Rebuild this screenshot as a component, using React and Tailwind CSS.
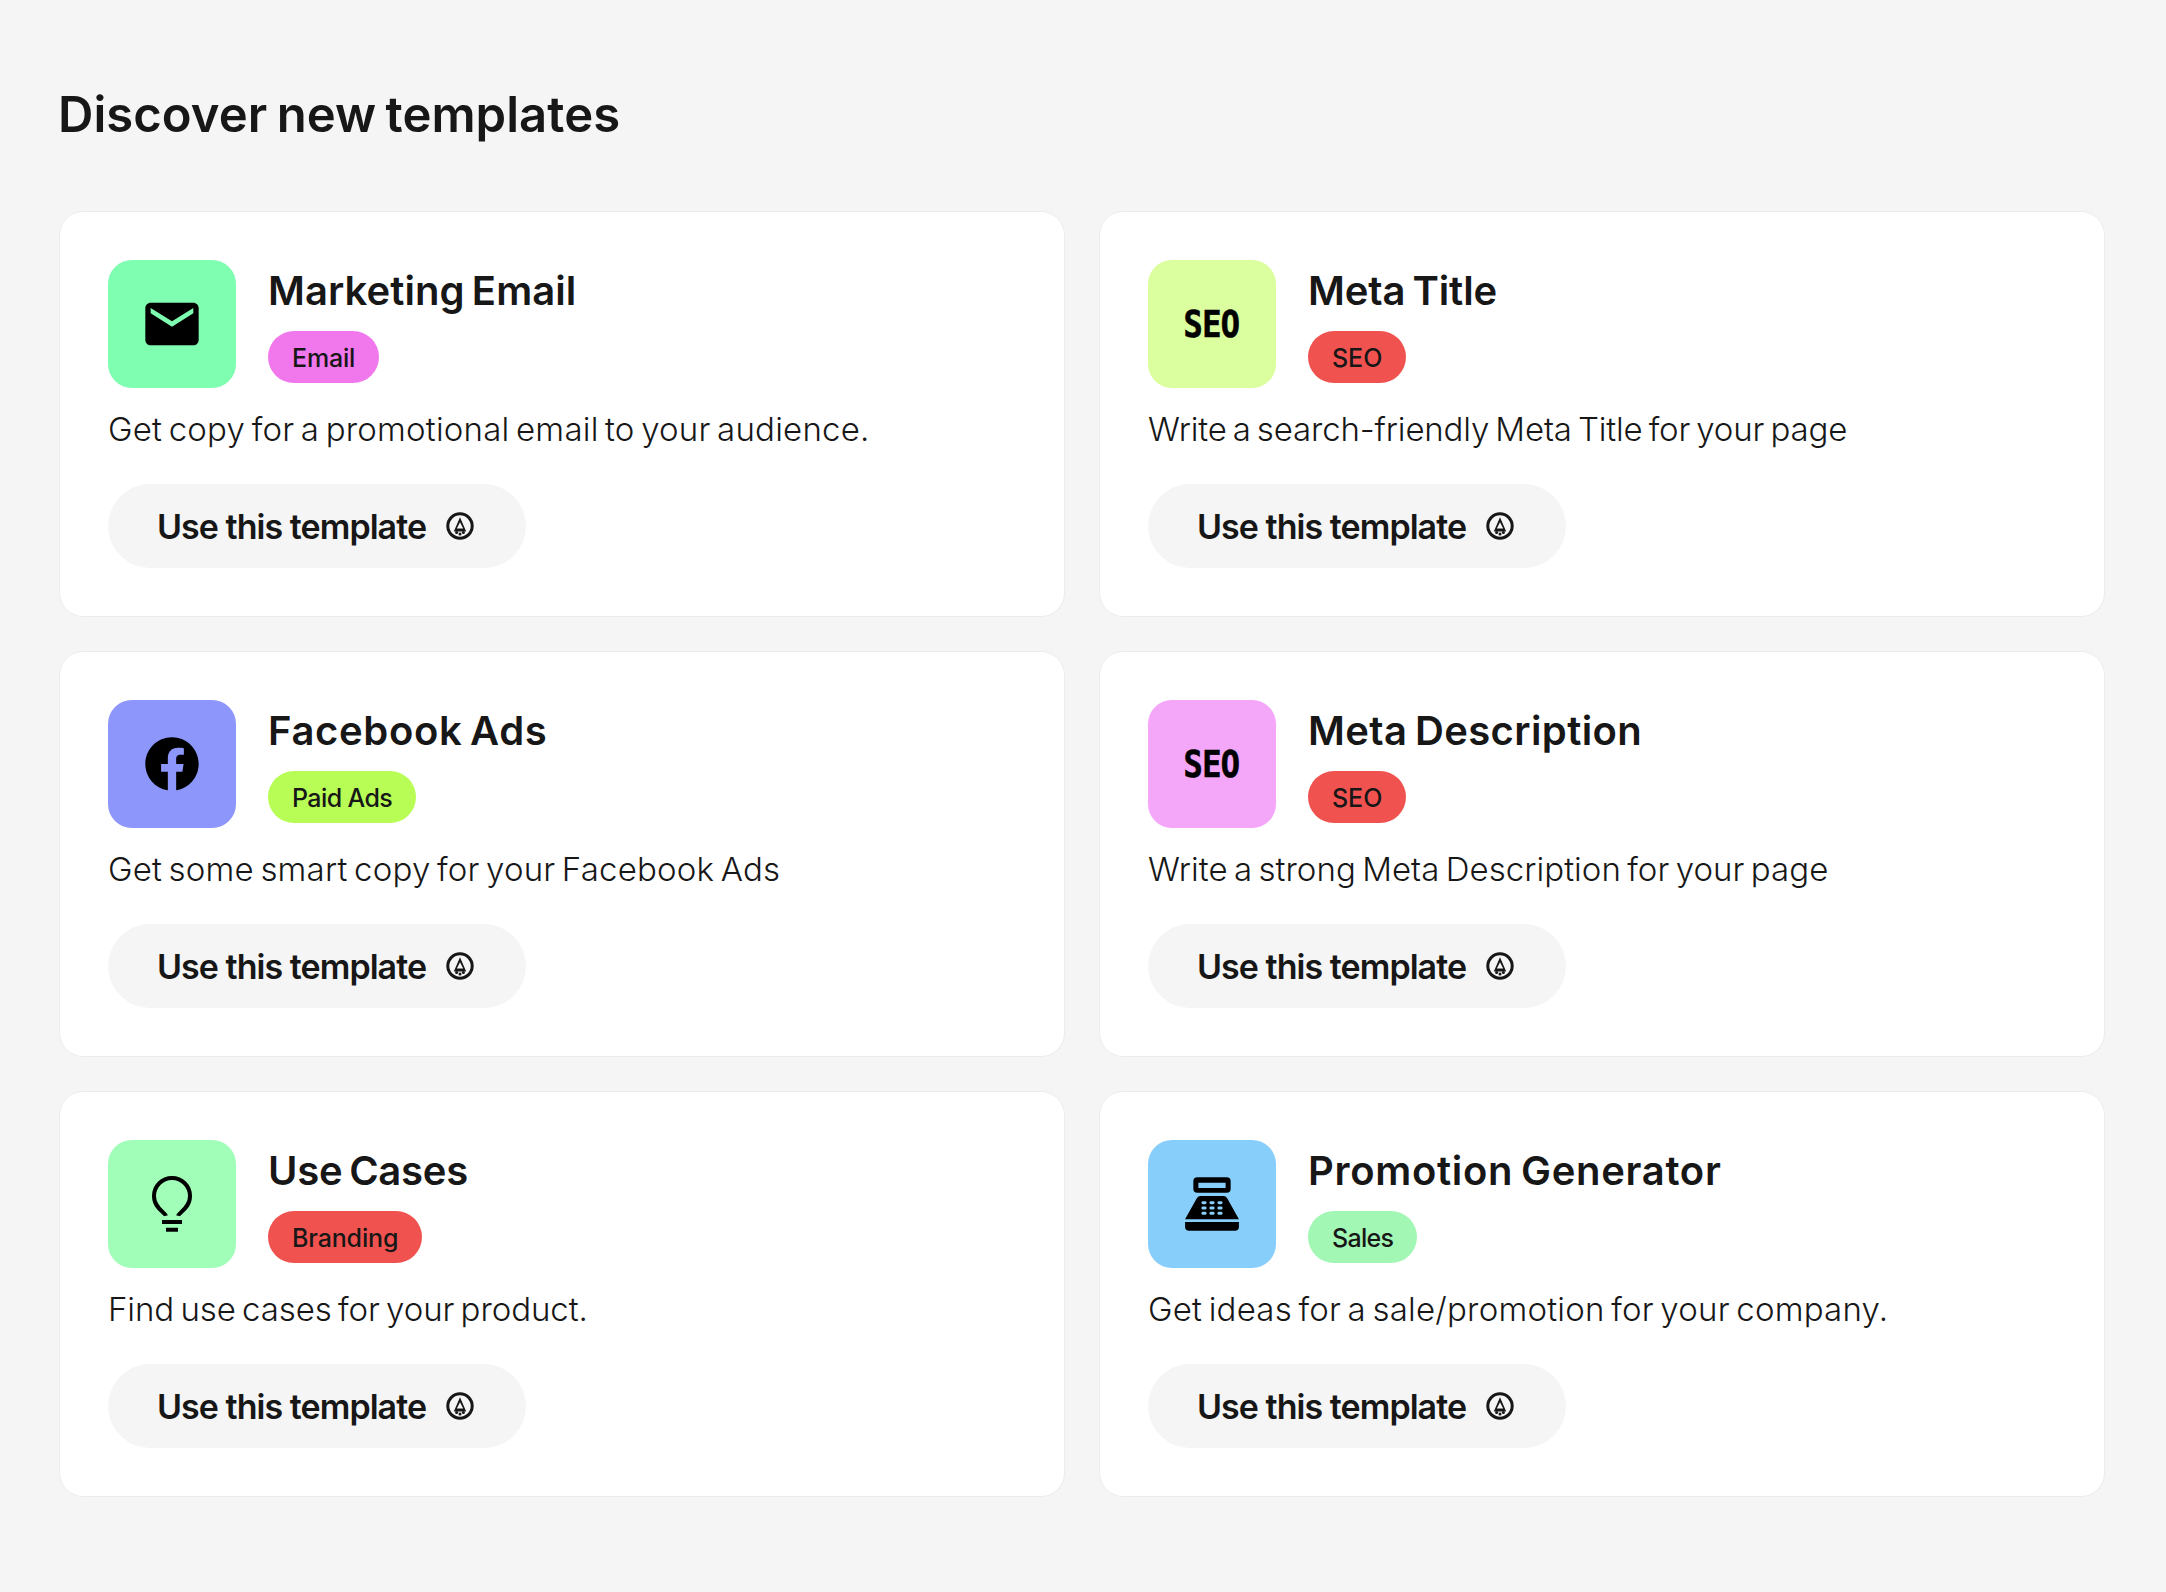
const items = [
  { title: "Marketing Email", titleTrack: "tracking-[0.08px]", badge: "Email", badgeTrack: "tracking-[-0.2px]", badgeBg: "bg-[#f178ec]", tile: "bg-[#7ffdb0]", icon: "mail", desc: "Get copy for a promotional email to your audience.", descTrack: "tracking-[0.22px]" },
  { title: "Meta Title", titleTrack: "tracking-[-0.1px]", badge: "SEO", badgeTrack: "tracking-[-0.05px]", badgeBg: "bg-[#f0534f]", tile: "bg-[#dbfe9e]", icon: "seo", desc: "Write a search-friendly Meta Title for your page", descTrack: "tracking-[-0.15px]" },
  { title: "Facebook Ads", titleTrack: "tracking-[0.65px]", badge: "Paid Ads", badgeTrack: "tracking-[-0.6px]", badgeBg: "bg-[#b8fd55]", tile: "bg-[#8c96fb]", icon: "fb", desc: "Get some smart copy for your Facebook Ads", descTrack: "tracking-[0.2px]" },
  { title: "Meta Description", titleTrack: "tracking-[0.4px]", badge: "SEO", badgeTrack: "tracking-[-0.05px]", badgeBg: "bg-[#f0534f]", tile: "bg-[#f4a6f8]", icon: "seo", desc: "Write a strong Meta Description for your page", descTrack: "tracking-[0.05px]" },
  { title: "Use Cases", titleTrack: "tracking-[-0.25px]", badge: "Branding", badgeTrack: "tracking-[-0.15px]", badgeBg: "bg-[#f0534f]", tile: "bg-[#a0feb8]", icon: "bulb", desc: "Find use cases for your product.", descTrack: "tracking-[-0.06px]" },
  { title: "Promotion Generator", titleTrack: "tracking-[0.7px]", badge: "Sales", badgeTrack: "tracking-[-0.7px]", badgeBg: "bg-[#a3f7b5]", tile: "bg-[#87cefa]", icon: "reg", desc: "Get ideas for a sale/promotion for your company.", descTrack: "tracking-[0.22px]" },
];

function TileIcon({ kind }) {
  if (kind === "seo") {
    return (
      <span className="inline-block scale-x-[0.86] font-['DejaVu_Sans_Mono',monospace] font-bold text-[37px] leading-none tracking-[-0.6px] [-webkit-text-stroke:0.7px_black] text-black">SEO</span>
    );
  }
  return (
    <svg width="64" height="64" viewBox="0 0 24 24" fill="#000">
      {kind === "mail" && (
        <path d="M20 4H4c-1.1 0-2 .9-2 2v12c0 1.1.9 2 2 2h16c1.1 0 2-.9 2-2V6c0-1.1-.9-2-2-2zm0 4l-8 5-8-5V6l8 5 8-5v2z" />
      )}
      {kind === "fb" && (
        <path d="M12 2C6.477 2 2 6.477 2 12c0 4.991 3.657 9.128 8.438 9.879V14.89h-2.54V12h2.54V9.797c0-2.506 1.492-3.89 3.777-3.89 1.094 0 2.238.195 2.238.195v2.46h-1.26c-1.243 0-1.63.771-1.63 1.562V12h2.773l-.443 2.89h-2.33v6.989C18.343 21.129 22 16.99 22 12c0-5.523-4.477-10-10-10z" />
      )}
      {kind === "bulb" && (
        <g>
          <path d="M9.75 16.4C9.5 15.2 5.25 13.6 5.25 9A6.75 6.75 0 0 1 18.75 9C18.75 13.6 14.5 15.2 14.25 16.4" fill="none" stroke="#000" strokeWidth="1.5" />
          <rect x="8.25" y="18" width="7.5" height="1.5" />
          <rect x="9.75" y="20.9" width="4.5" height="1.5" />
        </g>
      )}
      {kind === "reg" && (
        <g>
          <path fillRule="evenodd" d="M6.5 2H17.5A1.5 1.5 0 0 1 19 3.5V6.25A1.5 1.5 0 0 1 17.5 7.75H6.5A1.5 1.5 0 0 1 5 6.25V3.5A1.5 1.5 0 0 1 6.5 2ZM6.9 4V6H17.1V4Z" />
          <path d="M7.6 9H16.4Q17.4 9 17.8 10L22.1 17.75H1.9L6.2 10Q6.6 9 7.6 9Z" />
          <path d="M1.9 18.75H22.1V20.5A1.5 1.5 0 0 1 20.6 22H3.4A1.5 1.5 0 0 1 1.9 20.5Z" />
          {[11.5, 13.5, 15.5].map((y) =>
            [9, 12, 15].map((x) => (
              <rect key={x + "-" + y} x={x - 0.95} y={y - 0.55} width="1.9" height="1.1" rx="0.5" fill="#87cefa" />
            ))
          )}
        </g>
      )}
    </svg>
  );
}

function PencilMark() {
  return (
    <svg width="28" height="28" viewBox="0 0 28 28" className="shrink-0">
      <circle cx="14" cy="14" r="12.2" fill="none" stroke="#171717" strokeWidth="3" />
      <path fillRule="evenodd" fill="#171717" d="M14 5.3L20.2 19.6H7.8ZM14 10.2L10.8 16.4H17.2Z" />
      <circle cx="10.6" cy="20.4" r="1.5" fill="#171717" />
      <circle cx="14" cy="22" r="1.5" fill="#171717" />
      <circle cx="17.4" cy="20.4" r="1.5" fill="#171717" />
    </svg>
  );
}

function Card({ item }) {
  return (
    <div className="bg-white border border-[#ececec] rounded-[24px] p-[48px] h-[406px]">
      <div className="flex gap-[32px] h-[128px]">
        <div className={`w-[128px] h-[128px] rounded-[24px] flex items-center justify-center shrink-0 ${item.tile}`}>
          <TileIcon kind={item.icon} />
        </div>
        <div className="flex flex-col items-start">
          <h2 className={`text-[40px] leading-[62px] font-semibold [word-spacing:-3px] text-[#171717] ${item.titleTrack}`}>{item.title}</h2>
          <span className={`mt-[9px] h-[52px] px-[24px] pt-[3px] rounded-full flex items-center text-[25px] font-medium text-[#171717] ${item.badgeTrack} ${item.badgeBg}`}>{item.badge}</span>
        </div>
      </div>
      <p className={`mt-[17px] text-[33px] leading-[48px] font-light [word-spacing:-3px] text-[#171717] ${item.descTrack}`}>{item.desc}</p>
      <button className="mt-[31px] h-[84px] w-[418px] pl-[49px] rounded-full bg-[#f5f5f5] flex items-center gap-[20px] text-[34px] font-semibold tracking-[-0.95px] text-[#171717]">
        <span>Use this template</span>
        <PencilMark />
      </button>
    </div>
  );
}

export default function App() {
  return (
    <div className="min-h-[1592px] bg-[#f5f5f5] pl-[59px] pr-[61px] pt-[80px] font-['Inter',sans-serif]">
      <h1 className="-ml-px text-[49px] leading-[70px] font-semibold tracking-[0.05px] [word-spacing:-3px] text-[#171717]">Discover new templates</h1>
      <div className="mt-[61px] grid grid-cols-2 gap-[34px]">
        {items.map((item) => (
          <Card key={item.title} item={item} />
        ))}
      </div>
    </div>
  );
}
